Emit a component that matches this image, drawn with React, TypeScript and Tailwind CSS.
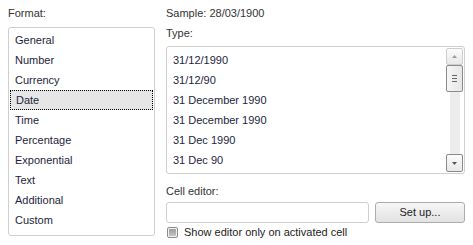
import React from "react";

const formats = ["General","Number","Currency","Date","Time","Percentage","Exponential","Text","Additional","Custom"];
const types = ["31/12/1990","31/12/90","31 December 1990","31 December 1990","31 Dec 1990","31 Dec 90"];

export default function App() {
  return (
    <div className="w-[473px] h-[245px] bg-white text-[11px] leading-[13px] text-[#333]" style={{fontFamily: '"Liberation Sans", Arial, sans-serif'}}>
      <div className="flex pl-[8px] pt-[7px]">
        {/* Left */}
        <div className="w-[147px] flex flex-col">
          <div className="h-[13px]">Format:</div>
          <div className="mt-[7px] h-[209px] border border-[#cfcfcf] rounded-[3px] px-[1px] pt-[2px]">
            {formats.map((f) => (
              <div
                key={f}
                className={
                  "h-[20px] flex items-center pl-[5px] text-[#1e1e3c] " +
                  (f === "Date" ? "bg-[#e6e6e6] border border-dotted border-black pl-[4px]" : "")
                }
              >
                {f}
              </div>
            ))}
          </div>
        </div>
        {/* Right */}
        <div className="ml-[11px] w-[299px] flex flex-col">
          <div className="h-[13px]">Sample: 28/03/1900</div>
          <div className="mt-[7px] h-[13px]">Type:</div>
          <div className="mt-[6px] h-[128px] border border-[#cfcfcf] rounded-[3px] flex">
            <div className="flex-1 pt-[3px]">
              {types.map((t, i) => (
                <div key={i} className="h-[20px] flex items-center pl-[6px] text-[#1e1e3c]">{t}</div>
              ))}
            </div>
            <div className="w-[17px] mr-[1px] my-[1px] flex flex-col items-center">
              <div className="w-[17px] h-[17px] border border-[#cdcdcd] rounded-[2px] bg-gradient-to-b from-[#fbfbfb] to-[#e8e8e8] flex items-center justify-center">
                <svg width="5" height="3" viewBox="0 0 5 3"><path d="M2.5 0 L5 3 L0 3 Z" fill="#9a9a9a" /></svg>
              </div>
              <div className="w-[17px] h-[27px] border border-[#8a8a8a] rounded-[2px] bg-gradient-to-r from-[#f6f6f6] to-[#e6e6e6] flex flex-col items-center justify-center gap-[2px]">
                <div className="w-[5px] h-px bg-[#666]" />
                <div className="w-[5px] h-px bg-[#666]" />
                <div className="w-[5px] h-px bg-[#666]" />
              </div>
              <div className="w-[10px] flex-1 bg-[#ececec]" />
              <div className="w-[17px] h-[18px] border border-[#8a8a8a] rounded-[2px] bg-gradient-to-b from-[#fbfbfb] to-[#e8e8e8] flex items-center justify-center">
                <svg width="5" height="3" viewBox="0 0 5 3"><path d="M0 0 L5 0 L2.5 3 Z" fill="#555" /></svg>
              </div>
            </div>
          </div>
          <div className="mt-[11px] h-[13px]">Cell editor:</div>
          <div className="mt-[4px] flex">
            <div className="w-[203px] h-[21px] border border-[#cfcfcf] rounded-[3px] bg-white" />
            <button className="ml-[6px] w-[90px] h-[21px] border border-[#acacac] rounded-[3px] bg-gradient-to-b from-[#f6f6f6] to-[#e2e2e2] text-[#222] text-[11px] flex items-center justify-center">
              Set up...
            </button>
          </div>
          <div className="mt-[3px] flex items-center">
            <div className="w-[11px] h-[11px] border border-[#8e8e8e] rounded-[2px] bg-[#f0f0f0] flex items-center justify-center ml-[1px]">
              <div className="w-[7px] h-[7px] bg-gradient-to-b from-[#9c9c9c] to-[#c4c4c4] rounded-[1px]" />
            </div>
            <span className="ml-[6px] text-[#222]">Show editor only on activated cell</span>
          </div>
        </div>
      </div>
    </div>
  );
}
